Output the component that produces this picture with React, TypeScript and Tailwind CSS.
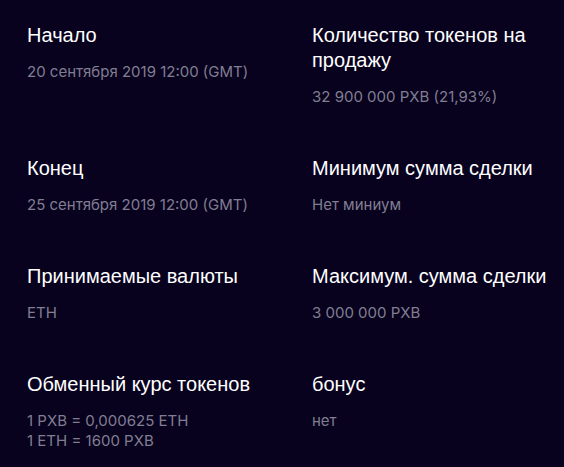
const items = [
  { title: "Начало", value: ["20 сентября 2019 12:00 (GMT)"] },
  { title: "Количество токенов на продажу", value: ["32 900 000 PXB (21,93%)"] },
  { title: "Конец", value: ["25 сентября 2019 12:00 (GMT)"] },
  { title: "Минимум сумма сделки", value: ["Нет миниум"] },
  { title: "Принимаемые валюты", value: ["ETH"] },
  { title: "Максимум. сумма сделки", value: ["3 000 000 PXB"] },
  { title: "Обменный курс токенов", value: ["1 PXB = 0,000625 ETH", "1 ETH = 1600 PXB"] },
  { title: "бонус", value: ["нет"] },
];

const App = () => {
  return (
    <div className="min-h-[467px] w-full bg-[#08021f] pl-[27px] pr-4 pt-[23px] pb-6">
      <div className="grid grid-cols-[285px_1fr] gap-y-[49px]">
        {items.map((item) => (
          <div key={item.title} className="flex flex-col">
            <h3 className="mb-[14px] font-['Liberation_Sans',Arial,sans-serif] text-[20px] leading-[25px] text-white">
              {item.title}
            </h3>
            <div className="font-['Inter',sans-serif] text-[15px] leading-[20px] text-[#817e91]">
              {item.value.map((line) => (
                <div key={line}>{line}</div>
              ))}
            </div>
          </div>
        ))}
      </div>
    </div>
  );
};

export default App;
